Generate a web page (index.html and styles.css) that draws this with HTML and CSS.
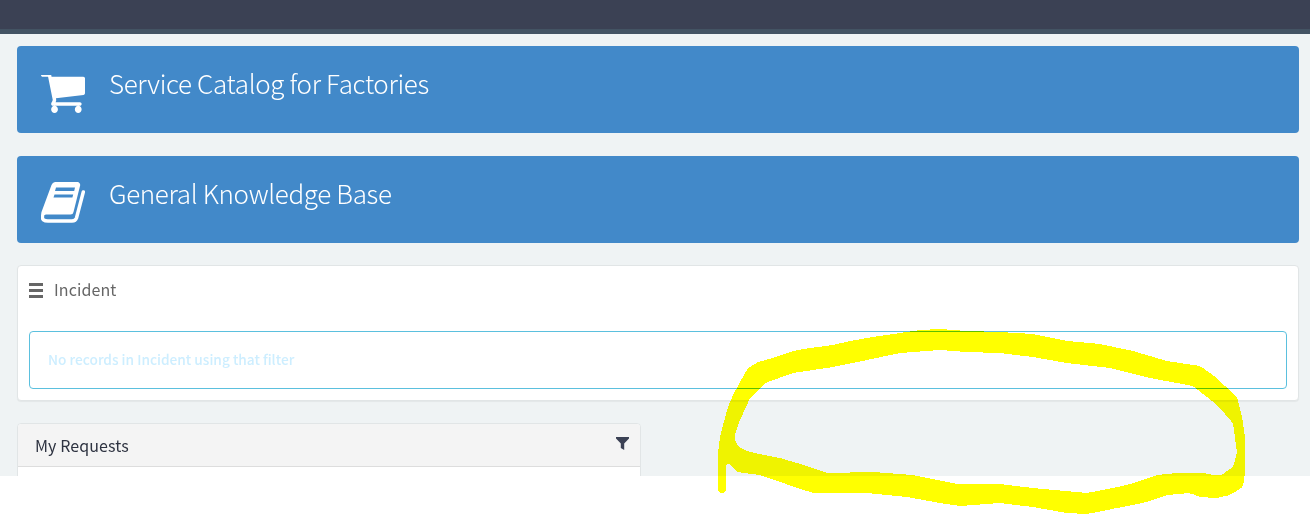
FILE: index.html
```html
<!DOCTYPE html>
<html lang="en">
<head>
    <meta charset="UTF-8">
    <meta name="viewport" content="width=device-width, initial-scale=1.0">
    <title>Service Portal</title>
    <link rel="stylesheet" href="styles.css">
</head>
<body>
    <div class="page">
        <div class="topbar"></div>
        <div class="content">
            <a class="banner">
                <svg class="banner-icon icon-cart" width="44" height="38" viewBox="64 320 1664 1344" preserveAspectRatio="none">
                    <path fill="#fff" d="M704 1536q0 52-38 90t-90 38-90-38-38-90 38-90 90-38 90 38 38 90zm896 0q0 52-38 90t-90 38-90-38-38-90 38-90 90-38 90 38 38 90zm128-1088v512q0 24-16.500 42.500t-40.500 21.500l-1044 122q13 60 13 70 0 16-24 64h920q26 0 45 19t19 45-19 45-45 19h-1024q-26 0-45-19t-19-45q0-11 8-31.500t16-36 21.500-40 15.500-29.500l-177-823h-204q-26 0-45-19t-19-45 19-45 45-19h256q16 0 28.500 6.500t19.500 15.500 13 24.500 8 26 5.500 29.500 4.500 26h1201q26 0 45 19t19 45z"/>
                </svg>
                <span class="banner-title">Service Catalog for Factories</span>
            </a>
            <a class="banner">
                <svg class="banner-icon icon-book" width="44" height="41" viewBox="0 0 44 41">
                    <path fill="#fff" d="M14 0H36a3 3 0 0 1 3 4L32.500 30a3 3 0 0 1-3 2.500H6.500C4 32.500 3 33 3 34L1 35C0 34 0 32 .5 30L10.500 3A5 5 0 0 1 14 0Z"/>
                    <path fill="none" stroke="#fff" stroke-width="3.500" stroke-linecap="round" d="M42.300 10L35.500 36Q34.500 39 31 39H7C3 39 .8 37.500 1.500 34"/>
                    <path fill="#4289c9" d="M15 5.500H34L33.200 9H14ZM13.500 12.500H32.200L31.400 15.500H12.500Z"/>
                </svg>
                <span class="banner-title">General Knowledge Base</span>
            </a>

            <div class="incident-card">
                <div class="incident-head">
                    <span class="menu-icon"><i></i><i></i><i></i></span>
                    <span class="incident-title">Incident</span>
                </div>
                <div class="empty-alert">No records in Incident using that filter</div>
            </div>

            <div class="requests-panel">
                <div class="requests-head">
                    <span class="requests-title">My Requests</span>
                    <svg class="filter-icon" width="13" height="13" viewBox="0 0 13 13">
                        <path fill="#3b4154" d="M0 0H13V1.500L8.200 6.500V13L4.800 11V6.500L0 1.500Z"/>
                    </svg>
                </div>
            </div>
        </div>
    </div>

    <!-- hand drawn marker ring on top of the screenshot -->
    <svg class="scribble" width="1310" height="514" viewBox="0 0 1310 514">
        <filter id="marker" x="0" y="0" width="100%" height="100%" filterUnits="userSpaceOnUse" primitiveUnits="userSpaceOnUse" color-interpolation-filters="sRGB">
            <feGaussianBlur stdDeviation="2"/>
            <feComponentTransfer>
                <feFuncA type="discrete" tableValues="0 1"/>
            </feComponentTransfer>
        </filter>
        <path filter="url(#marker)" fill="#ff0" fill-rule="evenodd" d="M718 493L718 453 720 437 723 425 728 407 733 395 740 382 748 368 758 362 773 358 793 351 810 348 833 345 850 341 873 337 900 333 920 330 940 329 967 331 1000 332 1033 334 1067 341 1100 344 1133 351 1167 361 1200 366 1213 375 1237 397 1242 417 1245 437 1245 473 1243 487 1230 495 1217 498 1200 497 1190 493 1167 495 1147 502 1117 508 1087 514 1067 513 1033 507 1000 503 960 506 940 503 907 497 867 493 813 493 783 483 760 475 737 472 728 462 726 460 726 493Z M734 437L740 420 750 398 765 383 793 373 833 367 867 360 900 353 940 350 967 352 1000 353 1033 357 1067 363 1110 368 1150 378 1193 386 1217 405 1233 423 1237 453 1233 467 1220 476 1203 473 1177 473 1157 475 1127 485 1087 493 1033 488 1000 484 957 484 913 475 873 472 827 473 807 466 780 458 750 452 738 447Z"/>
    </svg>
</body>
</html>
```

FILE: styles.css
```css
body{
    margin: 0;
    height: 514px;
    background-color: #fff;
    font-family: "Noto Sans CJK SC", "Noto Sans", sans-serif;
    overflow: hidden;
}
.page{
    height: 476px;
    overflow: hidden;
    background-color: #eff3f4;
}
.topbar{
    height: 29px;
    background-color: #3b4154;
    border-bottom: 5px solid #435363;
}
.content{
    padding: 12px 11px 0 17px;
}
.banner{
    display: flex;
    align-items: center;
    height: 87px;
    padding-left: 24px;
    background-color: #4289c9;
    border-radius: 4px;
    color: #fff;
}
.banner + .banner{
    margin-top: 23px;
}
.banner-icon{
    flex: none;
}
.icon-cart{
    margin-top: 9px;
}
.icon-book{
    margin-top: 6px;
}
.banner-title{
    margin-left: 24px;
    padding-bottom: 14px;
    font-size: 26px;
    font-weight: 300;
    letter-spacing: -0.35px;
}
.incident-card{
    height: 134px;
    margin: 22px 0;
    padding: 0 11px;
    background-color: #fff;
    border: 1px solid #e1e5e6;
    border-radius: 4px;
    box-shadow: 0 1px 1px rgba(0,0,0,.05);
}
.incident-head{
    display: flex;
    align-items: center;
    height: 49px;
    margin-bottom: 16px;
}
.menu-icon{
    display: flex;
    flex-direction: column;
    gap: 3px;
    width: 14px;
}
.menu-icon i{
    display: block;
    height: 3px;
    background-color: #666;
}
.incident-title{
    margin-left: 11px;
    padding-bottom: 4px;
    font-size: 16px;
    letter-spacing: .1px;
    color: #666;
}
.empty-alert{
    height: 56px;
    line-height: 54px;
    padding-left: 18px;
    border: 1px solid #5bc0de;
    border-radius: 4px;
    font-size: 13.7px;
    font-weight: 500;
    color: #cdeeff;
}
.requests-panel{
    width: 622px;
    height: 80px;
    background-color: #fff;
    border: 1px solid #e1e5e6;
    border-radius: 4px;
}
.requests-head{
    display: flex;
    justify-content: space-between;
    height: 42px;
    padding: 0 11px 0 17px;
    background-color: #f4f4f4;
    border-bottom: 1px solid #ddd;
    border-radius: 4px 4px 0 0;
}
.requests-title{
    line-height: 42px;
    font-size: 16px;
    letter-spacing: .1px;
    color: #2e3341;
}
.filter-icon{
    margin-top: 13px;
}
.scribble{
    position: absolute;
    top: 0;
    left: 0;
    mix-blend-mode: multiply;
    pointer-events: none;
}
```
